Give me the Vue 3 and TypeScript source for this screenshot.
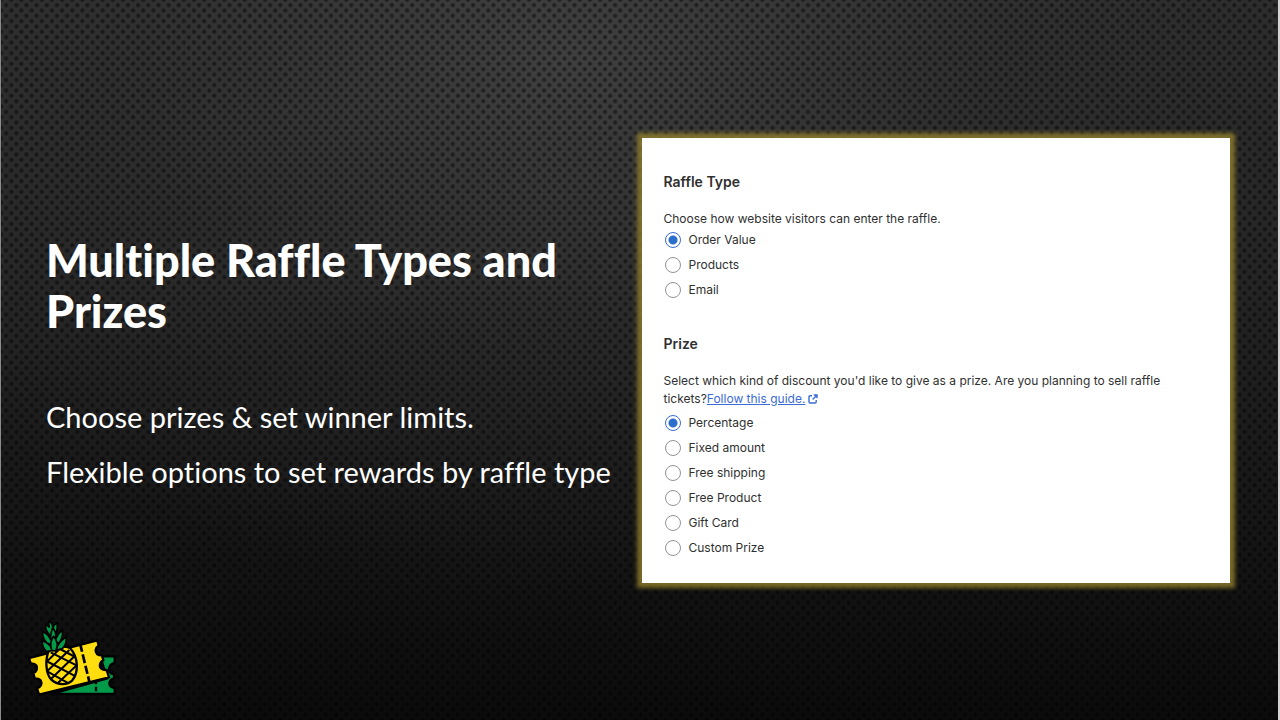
<script setup lang="ts">
import { ref } from 'vue'

const raffleTypes: string[] = ['Order Value', 'Products', 'Email']
const prizes: string[] = ['Percentage', 'Fixed amount', 'Free shipping', 'Free Product', 'Gift Card', 'Custom Prize']
const raffleType = ref('Order Value')
const prize = ref('Percentage')
</script>

<template>
  <main class="slide">
    <svg class="mesh" aria-hidden="true">
      <defs>
        <radialGradient id="dot">
          <stop offset="0" stop-color="#000" stop-opacity="0.5" />
          <stop offset="0.5" stop-color="#000" stop-opacity="0.45" />
          <stop offset="1" stop-color="#000" stop-opacity="0" />
        </radialGradient>
        <pattern id="holes" width="10.15" height="10.67" patternUnits="userSpaceOnUse">
          <circle cx="5.2" cy="5.1" r="2.8" fill="url(#dot)" />
          <g fill="url(#dot)">
            <circle cx="0.12" cy="-0.23" r="2.8" />
            <circle cx="10.27" cy="-0.23" r="2.8" />
            <circle cx="0.12" cy="10.44" r="2.8" />
            <circle cx="10.27" cy="10.44" r="2.8" />
          </g>
        </pattern>
      </defs>
      <rect width="100%" height="100%" fill="url(#holes)" />
    </svg>

    <section class="pitch">
      <h1>Multiple Raffle Types and Prizes</h1>
      <p>Choose prizes &amp; set winner limits.</p>
      <p>Flexible options to set rewards by raffle type</p>
    </section>

    <form class="card">
      <fieldset>
        <legend>Raffle Type</legend>
        <p>Choose how website visitors can enter the raffle.</p>
        <label v-for="t in raffleTypes" :key="t">
          <input v-model="raffleType" type="radio" name="raffle-type" :value="t" />{{ t }}
        </label>
      </fieldset>
      <fieldset>
        <legend>Prize</legend>
        <p class="wide">
          Select which kind of discount you'd like to give as a prize. Are you planning to sell raffle
          tickets?<a href="#guide">Follow this guide.</a>
          <svg class="external" viewBox="0 0 10 10" aria-hidden="true">
            <path d="M4 1.7H2.2Q1 1.7 1 2.9V7.8Q1 9 2.2 9H7Q8.2 9 8.2 7.8V6M5.8 1H9V4.2M9 1L4.6 5.4" />
          </svg>
        </p>
        <label v-for="p in prizes" :key="p">
          <input v-model="prize" type="radio" name="prize" :value="p" />{{ p }}
        </label>
      </fieldset>
    </form>

    <svg class="logo" viewBox="0 0 315 270" role="img" aria-label="Pineapple raffle tickets">
      <g stroke="#000" stroke-width="7" stroke-linejoin="round">
        <path fill="#009a49" d="M95 237L262 190L240 124H284V144C270 146 264 160 268 170C272 176 278 177 282 178V190C268 193 265 207 272 214C276 218 280 218 284 219V237Z" />
        <path d="M228 194V236" stroke-dasharray="14 7" fill="none" />
        <path fill="#ffdd0f" d="M27 129L232 76L236 91C226 98 224 110 231 117C236 121 241 121 246 121L250 136C238 141 237 156 244 161C250 166 256 165 260 165L267 187L57 239L51 220C62 217 68 206 62 196C57 189 49 190 44 190L40 174C50 170 54 160 49 151C44 144 36 145 32 145Z" />
        <path d="M181 89L208 200" fill="none" stroke-width="8" stroke-dasharray="22 8 27 8 25 8" />
        <path fill="#ffdd0f" d="M88 104C74 132 77 177 94 194C113 212 142 211 157 196C176 173 176 127 150 99C134 92 108 94 88 104Z" />
        <path fill="none" stroke-width="6" d="M120 102L166 126M92 112L171 152M79 138L163 182M83 170L146 205M80 140L118 103M82 168L148 105M92 193L165 122M113 205L171 150" />
      </g>
      <g fill="#009a49" stroke="#000" stroke-width="5" stroke-linejoin="round">
        <path d="M87 17Q97 25 99 36Q104 27 112 23Q114 42 106 58L92 62Q74 47 77 29Q82 31 88 36Q85 26 87 17Z" />
        <path d="M68 50Q84 56 92 74Q91 55 98 38Q109 50 108 70Q114 54 127 46Q130 66 119 82L98 90L81 84Q66 68 68 50Z" />
        <path d="M66 78Q86 82 99 106L80 110Q67 97 66 78ZM139 66Q141 88 127 101L108 106Q114 80 139 66Z" />
        <path d="M101 64Q119 86 107 108L96 107Q86 84 101 64Z" />
      </g>
    </svg>
  </main>
</template>

<style>
body {
  margin: 0;
}
</style>

<style scoped>
.slide {
  position: relative;
  box-sizing: border-box;
  min-height: 100vh;
  display: grid;
  grid-template-columns: minmax(0, 1fr) minmax(0, 1fr);
  column-gap: 7px;
  align-items: center;
  padding: 0 48px 0 45px;
  border-left: 1px solid #8c8c8c;
  border-right: 2px solid #d4d4d4;
  background:
    radial-gradient(ellipse 62% 75% at 44% 8%, rgba(80, 80, 80, 0.55), rgba(60, 60, 60, 0.25) 55%, transparent),
    linear-gradient(#2c2c2c, #242424 40%, #161616 72%, #0b0b0b);
}

.mesh {
  position: absolute;
  inset: 0;
  width: 100%;
  height: 100%;
}

.pitch {
  position: relative;
  color: #fff;
  font-family: Lato, sans-serif;
  font-variant-ligatures: none;
  padding-top: 22px;
}

h1 {
  margin: 0 0 60px;
  font-size: 45px;
  line-height: 51px;
  font-weight: 900;
}

.pitch p {
  margin: 0 0 15px;
  font-size: 29px;
  line-height: 40px;
  white-space: nowrap;
}

.card {
  position: relative;
  box-sizing: border-box;
  padding: 32px 22px 22px;
  background: #fff;
  box-shadow: 0 0 4px 5px rgba(145, 127, 45, 0.8);
  color: #303030;
  font-family: Inter, sans-serif;
  font-size: 12px;
  line-height: 18px;
}

fieldset {
  margin: 0;
  padding: 0;
  border: 0;
  min-width: 0;
}

fieldset + fieldset {
  margin-top: 29px;
}

legend {
  padding: 0;
  margin-bottom: 16px;
  font-size: 14px;
  line-height: 24px;
  font-weight: 600;
}

.card p {
  margin: 0;
}

.card .wide {
  max-width: 510px;
  margin-bottom: 3px;
}

a {
  color: #3a6bd6;
}

.external {
  width: 10px;
  height: 10px;
  margin-left: 3px;
  vertical-align: -1px;
  fill: none;
  stroke: #3a6bd6;
  stroke-width: 1.4;
}

label {
  display: flex;
  align-items: center;
  gap: 8px;
  height: 25px;
}

input {
  appearance: none;
  box-sizing: border-box;
  width: 16px;
  height: 16px;
  margin: 0 0 0 1px;
  border: 1px solid #8f9499;
  border-radius: 50%;
  background: #fff;
}

input:checked {
  border-color: #3a6bd6;
  background: radial-gradient(circle, #2c6ecb 0 4px, #fff 5px);
}

.logo {
  position: absolute;
  left: 19px;
  bottom: 15px;
  width: 105px;
  height: 90px;
}
</style>
